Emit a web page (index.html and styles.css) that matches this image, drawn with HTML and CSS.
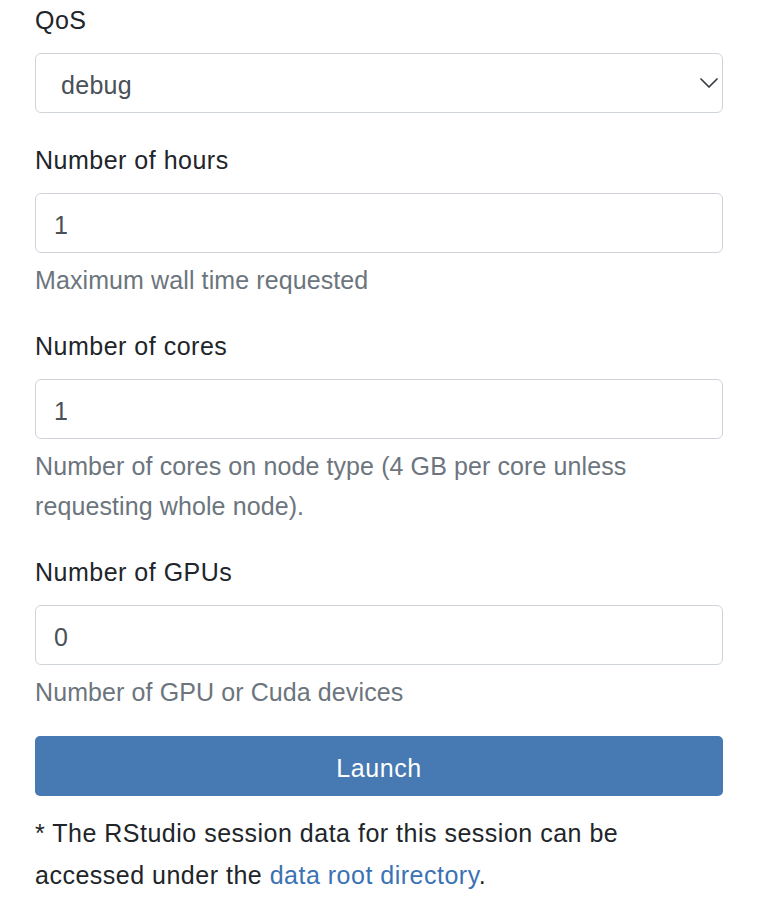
FILE: index.html
```html
<!DOCTYPE html>
<html lang="en">
<head>
<meta charset="utf-8">
<title>Session form</title>
<link rel="stylesheet" href="styles.css">
</head>
<body>
<form class="form">
  <div class="group">
    <label class="label" for="qos">QoS</label>
    <div class="select">
      <span class="select-value">debug</span>
      <svg class="chevron" width="20" height="12" viewBox="0 0 20 12" aria-hidden="true"><path d="M2 2l8 8 8-8" fill="none" stroke="#343a40" stroke-width="1.7" stroke-linecap="round" stroke-linejoin="round"/></svg>
    </div>
  </div>
  <div class="group">
    <label class="label">Number of hours</label>
    <div class="input">1</div>
    <div class="help">Maximum wall time requested</div>
  </div>
  <div class="group">
    <label class="label">Number of cores</label>
    <div class="input">1</div>
    <div class="help">Number of cores on node type (4 GB per core unless requesting whole node).</div>
  </div>
  <div class="group">
    <label class="label">Number of GPUs</label>
    <div class="input">0</div>
    <div class="help">Number of GPU or Cuda devices</div>
  </div>
  <button type="button" class="btn">Launch</button>
  <p class="note">* The RStudio session data for this session can be accessed under the <a class="link" href="#">data root directory</a>.</p>
</form>
</body>
</html>
```
FILE: styles.css
```css
html, body {
  margin: 0;
  padding: 0;
  background: #ffffff;
}
body {
  font-family: "Liberation Sans", Arial, sans-serif;
  font-size: 25px;
  line-height: 40px;
  color: #212529;
}
.form {
  width: 688px;
  padding-left: 35px;
  display: flex;
  flex-direction: column;
}
.group {
  display: flex;
  flex-direction: column;
  margin-bottom: 26px;
}
.group:first-child {
  margin-bottom: 27px;
}
.group:nth-last-of-type(1) {
  margin-bottom: 24px;
}
.label {
  display: block;
  margin-bottom: 13px;
  letter-spacing: 0.5px;
}
.select, .input {
  box-sizing: border-box;
  height: 60px;
  border: 1px solid #ced4da;
  border-radius: 6px;
  color: #495057;
  display: flex;
  align-items: center;
  padding-top: 3px;
}
.select {
  padding-left: 25px;
  padding-right: 3px;
  justify-content: space-between;
  letter-spacing: 0.3px;
}
.input {
  padding-left: 18px;
  padding-right: 18px;
}
.chevron {
  display: block;
  margin-top: -3px;
}
.help {
  margin-top: 7px;
  color: #6c757d;
  letter-spacing: 0.1px;
}
.btn {
  box-sizing: border-box;
  height: 60px;
  width: 100%;
  border: 0;
  border-radius: 5px;
  background: #4779b3;
  color: #ffffff;
  font-family: inherit;
  font-size: 25px;
  line-height: 40px;
  letter-spacing: 0.6px;
  padding: 3px 0 0 0;
}
.note {
  margin: 16px 0 0 0;
  width: 660px;
  line-height: 42px;
  letter-spacing: 0.5px;
}
.link {
  color: #3b72b4;
  text-decoration: none;
}
```
